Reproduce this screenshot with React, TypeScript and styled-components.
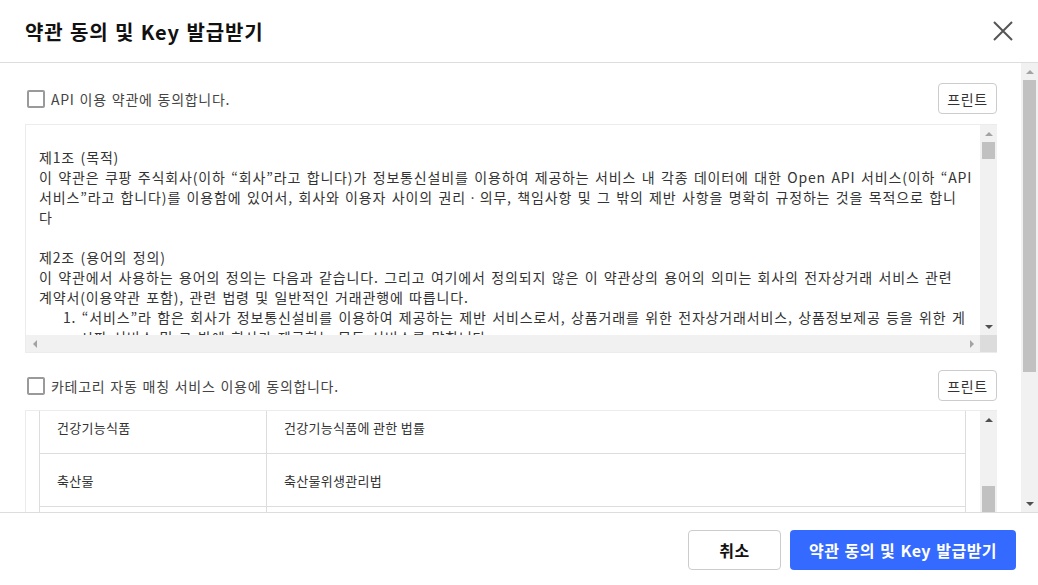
import React, { useEffect, useRef } from "react";
import styled, { createGlobalStyle, css } from "styled-components";

const GlobalStyle = createGlobalStyle`
  html, body { margin: 0; padding: 0; background: #fff; }
  body {
    font-family: "Noto Sans CJK KR", "Noto Sans", sans-serif;
    color: #333;
  }
  * { box-sizing: border-box; }
`;

const Modal = styled.div`
  width: 1038px;
  height: 585px;
  display: flex;
  flex-direction: column;
  background: #fff;
  overflow: hidden;
`;

const Header = styled.header`
  flex: none;
  height: 63px;
  border-bottom: 1px solid #dddddd;
  display: flex;
  align-items: center;
  justify-content: space-between;
  padding: 0 25px 0 25px;
`;

const Title = styled.h2`
  margin: 0;
  font-size: 20px;
  font-weight: 700;
  color: #111;
  letter-spacing: 0.9px;
  word-spacing: 1px;
`;

const CloseButton = styled.button`
  border: 0;
  background: none;
  padding: 0;
  width: 20px;
  height: 20px;
  display: flex;
  cursor: pointer;
`;

const Body = styled.div`
  flex: 1;
  min-height: 0;
  display: flex;
`;

const Content = styled.div`
  flex: 1;
  min-width: 0;
  overflow: hidden;
  padding: 20px 24px 0 25px;
`;

const AgreeRow = styled.div<{ $gap?: number }>`
  height: 31px;
  display: flex;
  align-items: center;
  justify-content: space-between;
  margin-top: ${(p) => p.$gap ?? 0}px;
`;

const CheckLabel = styled.label`
  display: flex;
  align-items: center;
  gap: 6px;
  font-size: 14px;
  color: #444;
  letter-spacing: 0.7px;
  word-spacing: 1.2px;
  cursor: pointer;
`;

const CheckBox = styled.input`
  appearance: none;
  margin: 0 0 0 2px;
  width: 18px;
  height: 18px;
  border: 2px solid #9a9a9a;
  border-radius: 2px;
  background: #fff;
`;

const PrintButton = styled.button`
  height: 31px;
  width: 59px;
  padding: 0;
  border: 1px solid #cccccc;
  border-radius: 4px;
  background: #fff;
  font-family: inherit;
  font-size: 14px;
  letter-spacing: 0.7px;
  color: #333;
`;

const ScrollBox = styled.div<{ $gap: number; $withHBar?: boolean }>`
  margin-top: ${(p) => p.$gap}px;
  height: 229px;
  border: 1px solid #ececec;
  border-right: 0;
  display: grid;
  grid-template-columns: minmax(0, 1fr) 17px;
  grid-template-rows: ${(p) => (p.$withHBar ? "minmax(0, 1fr) 17px" : "minmax(0, 1fr)")};
`;

const TextViewport = styled.div`
  overflow: hidden;
  padding: 22px 14px 0 13px;
  font-size: 14px;
  line-height: 20px;
  color: #333;
  letter-spacing: 0.85px;
  word-spacing: 1.5px;
`;

const Line = styled.div<{ $indent?: number }>`
  white-space: pre;
  height: 20px;
  padding-left: ${(p) => p.$indent ?? 0}px;
`;

const TableViewport = styled.div`
  overflow: hidden;
  min-height: 0;
  padding: 0 14px 0 13px;
`;

const Table = styled.table`
  width: 100%;
  border-collapse: collapse;
  font-size: 13px;
  color: #333;
  letter-spacing: 0.3px;
`;

const Cell = styled.td<{ $width?: number }>`
  height: 53px;
  padding: 0 17px;
  border: 1px solid #dddddd;
  vertical-align: middle;
  ${(p) => (p.$width ? `width: ${p.$width}px;` : "")}
`;

/* scrollbars */
const ScrollBar = styled.div<{ $horizontal?: boolean }>`
  display: flex;
  flex-direction: ${(p) => (p.$horizontal ? "row" : "column")};
  background: #f1f1f1;
  min-height: 0;
  min-width: 0;
  ${(p) => (p.$horizontal ? css`height: 17px;` : css`width: 17px;`)}
`;

const Track = styled.div<{ $horizontal?: boolean }>`
  flex: 1;
  min-height: 0;
  min-width: 0;
  display: flex;
  flex-direction: ${(p) => (p.$horizontal ? "row" : "column")};
  overflow: hidden;
`;

const ThumbGap = styled.div<{ $size: number }>`
  flex: none;
  height: ${(p) => p.$size}px;
`;

const Thumb = styled.div<{ $size: number }>`
  flex: none;
  height: ${(p) => p.$size}px;
  margin: 0 2px;
  background: #c1c1c1;
`;

type Dir = "up" | "down" | "left" | "right";

const arrowBorders: Record<Dir, string> = {
  up: "border-width: 0 4px 4px 4px;",
  down: "border-width: 4px 4px 0 4px;",
  left: "border-width: 4px 4px 4px 0;",
  right: "border-width: 4px 0 4px 4px;",
};

const arrowColorSide: Record<Dir, string> = {
  up: "bottom",
  down: "top",
  left: "right",
  right: "left",
};

const ArrowButton = styled.div<{ $dir: Dir; $dark?: boolean }>`
  flex: none;
  width: 17px;
  height: 17px;
  display: flex;
  align-items: center;
  justify-content: center;
  &::before {
    content: "";
    width: 0;
    height: 0;
    border-style: solid;
    border-color: transparent;
    ${(p) => arrowBorders[p.$dir]}
    border-${(p) => arrowColorSide[p.$dir]}-color: ${(p) => (p.$dark ? "#505050" : "#a3a3a3")};
  }
`;

const Corner = styled.div`
  background: #dcdcdc;
`;

const Footer = styled.footer`
  flex: none;
  height: 73px;
  border-top: 1px solid #dddddd;
  display: flex;
  justify-content: flex-end;
  align-items: center;
  gap: 9px;
  padding: 2px 22px 0 0;
`;

const Button = styled.button<{ $primary?: boolean }>`
  height: 40px;
  border-radius: 4px;
  font-family: inherit;
  font-size: 16px;
  letter-spacing: 0.5px;
  word-spacing: 1px;
  cursor: pointer;
  ${(p) =>
    p.$primary
      ? css`
          width: 226px;
          border: 0;
          background: #346aff;
          color: #fff;
          font-weight: 700;
        `
      : css`
          width: 93px;
          border: 1px solid #cccccc;
          background: #fff;
          color: #111;
          font-weight: 700;
        `}
`;

function VScroll({ gap, size, upDark, downDark }: { gap: number; size: number; upDark?: boolean; downDark?: boolean }) {
  return (
    <ScrollBar>
      <ArrowButton $dir="up" $dark={upDark} />
      <Track>
        <ThumbGap $size={gap} />
        <Thumb $size={size} />
      </Track>
      <ArrowButton $dir="down" $dark={downDark} />
    </ScrollBar>
  );
}

function HScroll() {
  return (
    <ScrollBar $horizontal>
      <ArrowButton $dir="left" />
      <Track $horizontal />
      <ArrowButton $dir="right" />
    </ScrollBar>
  );
}

const termLines: { text: string; indent?: number }[] = [
  { text: "제1조 (목적)" },
  { text: "이 약관은 쿠팡 주식회사(이하 “회사”라고 합니다)가 정보통신설비를 이용하여 제공하는 서비스 내 각종 데이터에 대한 Open API 서비스(이하 “API" },
  { text: "서비스”라고 합니다)를 이용함에 있어서, 회사와 이용자 사이의 권리ㆍ의무, 책임사항 및 그 밖의 제반 사항을 명확히 규정하는 것을 목적으로 합니" },
  { text: "다" },
  { text: "" },
  { text: "제2조 (용어의 정의)" },
  { text: "이 약관에서 사용하는 용어의 정의는 다음과 같습니다. 그리고 여기에서 정의되지 않은 이 약관상의 용어의 의미는 회사의 전자상거래 서비스 관련" },
  { text: "계약서(이용약관 포함), 관련 법령 및 일반적인 거래관행에 따릅니다." },
  { text: "1. “서비스”라 함은 회사가 정보통신설비를 이용하여 제공하는 제반 서비스로서, 상품거래를 위한 전자상거래서비스, 상품정보제공 등을 위한 게", indent: 24 },
  { text: "시판 서비스 및 그 밖에 회사가 제공하는 모든 서비스를 말합니다.", indent: 41 },
  { text: "2. “이용자”라 함은 이 약관에 따라 회사가 제공하는 API 서비스를 이용하는 자를 말합니다.", indent: 24 },
];

const categoryRows = [
  ["건강기능식품", "건강기능식품에 관한 법률"],
  ["축산물", "축산물위생관리법"],
  ["수산물", "농수산물 품질관리법"],
  ["의료기기", "의료기기법"],
  ["화장품", "화장품법"],
  ["주류", "주세법"],
  ["어린이제품", "어린이제품 안전 특별법"],
];

export default function App() {
  const tableRef = useRef<HTMLDivElement>(null);
  useEffect(() => {
    if (tableRef.current) tableRef.current.scrollTop = 11;
  }, []);

  return (
    <>
      <GlobalStyle />
      <Modal>
        <Header>
          <Title>약관 동의 및 Key 발급받기</Title>
          <CloseButton aria-label="닫기">
            <svg width="20" height="20" viewBox="0 0 20 20">
              <path d="M1 1 L19 19 M19 1 L1 19" stroke="#555" strokeWidth="2" fill="none" />
            </svg>
          </CloseButton>
        </Header>
        <Body>
          <Content>
            <AgreeRow>
              <CheckLabel>
                <CheckBox type="checkbox" />
                API 이용 약관에 동의합니다.
              </CheckLabel>
              <PrintButton>프린트</PrintButton>
            </AgreeRow>
            <ScrollBox $gap={10} $withHBar>
              <TextViewport>
                {termLines.map((l, i) => (
                  <Line key={i} $indent={l.indent}>
                    {l.text}
                  </Line>
                ))}
              </TextViewport>
              <VScroll gap={0} size={17} downDark />
              <HScroll />
              <Corner />
            </ScrollBox>

            <AgreeRow $gap={17}>
              <CheckLabel>
                <CheckBox type="checkbox" />
                카테고리 자동 매칭 서비스 이용에 동의합니다.
              </CheckLabel>
              <PrintButton>프린트</PrintButton>
            </AgreeRow>
            <ScrollBox $gap={9}>
              <TableViewport ref={tableRef}>
                <Table>
                  <tbody>
                    {categoryRows.map(([a, b]) => (
                      <tr key={a}>
                        <Cell $width={227}>{a}</Cell>
                        <Cell>{b}</Cell>
                      </tr>
                    ))}
                  </tbody>
                </Table>
              </TableViewport>
              <VScroll gap={58} size={40} upDark downDark />
            </ScrollBox>
          </Content>
          <VScroll gap={0} size={292} downDark />
        </Body>
        <Footer>
          <Button>취소</Button>
          <Button $primary>약관 동의 및 Key 발급받기</Button>
        </Footer>
      </Modal>
    </>
  );
}
